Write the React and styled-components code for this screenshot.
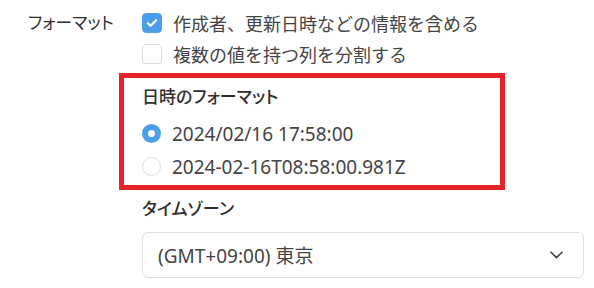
import React from "react";
import styled, { createGlobalStyle } from "styled-components";

const Global = createGlobalStyle`
  html, body { margin: 0; padding: 0; background: #fff; }
  body {
    font-family: "Noto Sans", "Noto Sans CJK JP", sans-serif;
    color: #3a3a3a;
    -webkit-font-smoothing: antialiased;
  }
`;

const Page = styled.div`
  width: 594px;
  height: 288px;
  box-sizing: border-box;
  padding: 7px 0 0 28px;
  display: grid;
  grid-template-columns: 114px 442px;
  align-items: start;
  overflow: hidden;
`;

const FieldLabel = styled.div`
  font-size: 17px;
  line-height: 31px;
  color: #2e2e2e;
  font-feature-settings: "palt";
`;

const Column = styled.div`
  display: flex;
  flex-direction: column;
`;

const CheckRow = styled.label`
  display: flex;
  align-items: center;
  gap: 11px;
  height: 31px;
  font-size: 18px;
  color: #444;
  white-space: nowrap;
`;

const Box = styled.span`
  width: 20px;
  height: 20px;
  box-sizing: border-box;
  border-radius: 4px;
  flex: none;
  display: flex;
  align-items: center;
  justify-content: center;
  background: ${(p) => (p.$checked ? "#4b9ee9" : "#fff")};
  border: 1px solid ${(p) => (p.$checked ? "#4b9ee9" : "#d8dbe0")};
`;

const Highlight = styled.div`
  margin: 4px 0 0 -23px;
  width: 386px;
  box-sizing: border-box;
  border: 5px solid #e8202a;
  padding: 7px 0 2px 18px;
`;

const SectionTitle = styled.div`
  font-size: 17px;
  font-weight: 500;
  line-height: 24px;
  color: #2e2e2e;
  font-feature-settings: "palt";
  margin: ${(p) => p.$margin || "0"};
`;

const RadioList = styled.div`
  margin-top: 8px;
  display: flex;
  flex-direction: column;
`;

const RadioRow = styled.label`
  display: flex;
  align-items: center;
  gap: 11px;
  height: 33px;
  font-size: 19px;
  color: #444;
  white-space: nowrap;
`;

const Dot = styled.span`
  width: 19px;
  height: 19px;
  box-sizing: border-box;
  border-radius: 50%;
  flex: none;
  background: #fff;
  border: ${(p) => (p.$checked ? "6px solid #4b9ee9" : "1px solid #dcdfe4")};
`;

const Select = styled.div`
  margin-top: 11px;
  height: 46px;
  box-sizing: border-box;
  border: 1px solid #dcdfe4;
  border-radius: 6px;
  display: flex;
  align-items: center;
  justify-content: space-between;
  padding: 0 20px 0 15px;
  font-size: 19px;
  color: #444;
`;

export default function App() {
  return (
    <>
      <Global />
      <Page>
        <FieldLabel>フォーマット</FieldLabel>
        <Column>
          <CheckRow>
            <Box $checked>
              <svg width="12" height="10" viewBox="0 0 12 10">
                <path d="M1.8 5.2 L4.6 7.8 L10.2 2.2" fill="none" stroke="#fff" strokeWidth="2.2" strokeLinecap="round" strokeLinejoin="round" />
              </svg>
            </Box>
            作成者、更新日時などの情報を含める
          </CheckRow>
          <CheckRow>
            <Box />
            複数の値を持つ列を分割する
          </CheckRow>
          <Highlight>
            <SectionTitle>日時のフォーマット</SectionTitle>
            <RadioList>
              <RadioRow>
                <Dot $checked />
                2024/02/16 17:58:00
              </RadioRow>
              <RadioRow>
                <Dot />
                2024-02-16T08:58:00.981Z
              </RadioRow>
            </RadioList>
          </Highlight>
          <SectionTitle $margin="7px 0 0 0">タイムゾーン</SectionTitle>
          <Select>
            <span>(GMT+09:00) 東京</span>
            <svg width="13" height="8" viewBox="0 0 13 8">
              <path d="M1 1.2 L6.5 6.6 L12 1.2" fill="none" stroke="#444" strokeWidth="1.6" strokeLinecap="round" strokeLinejoin="round" />
            </svg>
          </Select>
        </Column>
      </Page>
    </>
  );
}
